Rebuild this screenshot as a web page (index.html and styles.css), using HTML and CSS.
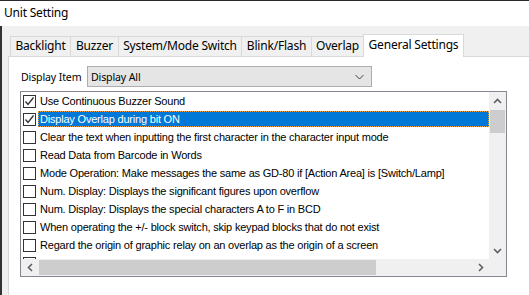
FILE: index.html
```html
<!DOCTYPE html>
<html>
<head>
<meta charset="utf-8">
<title>Unit Setting</title>
<link rel="stylesheet" href="styles.css">
</head>
<body>
<div class="window">
  <div class="titlebar">Unit Setting</div>
  <div class="client">
    <div class="tabs">
      <div class="tab t1">Backlight</div>
      <div class="tab t2">Buzzer</div>
      <div class="tab t3">System/Mode Switch</div>
      <div class="tab t4">Blink/Flash</div>
      <div class="tab t5">Overlap</div>
      <div class="tab t6 active">General Settings</div>
    </div>
    <div class="panel">
      <div class="field">
        <span class="label">Display Item</span>
        <div class="select">
          <span class="select-text">Display All</span>
          <svg class="select-arrow" width="9" height="6" viewBox="0 0 9 6"><polyline points="0.5,1 4.5,5 8.5,1" fill="none" stroke="#444" stroke-width="1"/></svg>
        </div>
      </div>
      <div class="listbox">
        <div class="items">
          <div class="row"><span class="cb"><svg width="11" height="11" viewBox="0 0 11 11"><polyline points="1.5,5.5 4,8.5 9.5,1.5" fill="none" stroke="#333" stroke-width="1.4"/></svg></span><span class="txt">Use Continuous Buzzer Sound</span></div>
          <div class="row selected"><span class="cb"><svg width="11" height="11" viewBox="0 0 11 11"><polyline points="1.5,5.5 4,8.5 9.5,1.5" fill="none" stroke="#333" stroke-width="1.4"/></svg></span><span class="txt">Display Overlap during bit ON</span></div>
          <div class="row"><span class="cb"></span><span class="txt">Clear the text when inputting the first character in the character input mode</span></div>
          <div class="row"><span class="cb"></span><span class="txt">Read Data from Barcode in Words</span></div>
          <div class="row"><span class="cb"></span><span class="txt">Mode Operation: Make messages the same as GD-80 if [Action Area] is [Switch/Lamp]</span></div>
          <div class="row"><span class="cb"></span><span class="txt">Num. Display: Displays the significant figures upon overflow</span></div>
          <div class="row"><span class="cb"></span><span class="txt">Num. Display: Displays the special characters A to F in BCD</span></div>
          <div class="row"><span class="cb"></span><span class="txt">When operating the +/- block switch, skip keypad blocks that do not exist</span></div>
          <div class="row"><span class="cb"></span><span class="txt">Regard the origin of graphic relay on an overlap as the origin of a screen</span></div>
          <div class="row"><span class="cb"></span><span class="txt">&nbsp;</span></div>
        </div>
        <div class="vscroll">
          <div class="sbtn"><svg width="9" height="6" viewBox="0 0 9 6"><polyline points="1,5 4.5,1.5 8,5" fill="none" stroke="#606060" stroke-width="1.6"/></svg></div>
          <div class="vthumb"></div>
          <div class="vtrack"></div>
          <div class="sbtn"><svg width="9" height="6" viewBox="0 0 9 6"><polyline points="1,1 4.5,4.5 8,1" fill="none" stroke="#606060" stroke-width="1.6"/></svg></div>
        </div>
        <div class="hscroll">
          <div class="sbtn"><svg width="6" height="9" viewBox="0 0 6 9"><polyline points="5,1 1.5,4.5 5,8" fill="none" stroke="#606060" stroke-width="1.6"/></svg></div>
          <div class="hthumb"></div>
          <div class="htrack"></div>
          <div class="sbtn"><svg width="6" height="9" viewBox="0 0 6 9"><polyline points="1,1 4.5,4.5 1,8" fill="none" stroke="#606060" stroke-width="1.6"/></svg></div>
        </div>
        <div class="corner"></div>
      </div>
    </div>
  </div>
</div>
</body>
</html>
```

FILE: styles.css
```css
html, body {
  margin: 0;
  padding: 0;
  background: #f0f0f0;
}
body {
  width: 529px;
  height: 295px;
  overflow: hidden;
  font-family: "Noto Sans", "Open Sans", sans-serif;
  color: #000;
}
.window {
  border-top: 1px solid #2b2b2b;
  height: 294px;
  display: flex;
  flex-direction: column;
}
.titlebar {
  height: 25px;
  line-height: 24px;
  background: #fff;
  padding-left: 4px;
  font-size: 12px;
  letter-spacing: -0.2px;
}
.client {
  flex: 1;
  background: #f0f0f0;
  border-left: 2px solid #333;
  padding: 10px 0 0 6px;
  display: flex;
  flex-direction: column;
}
.tabs {
  display: flex;
  align-items: flex-end;
  height: 20px;
  padding-left: 2px;
  position: relative;
  z-index: 1;
}
.tab {
  box-sizing: border-box;
  height: 20px;
  border: 1px solid #d9d9d9;
  border-bottom: none;
  margin-right: -1px;
  background: #f0f0f0;
  font-size: 12px;
  line-height: 18px;
  text-align: center;
  letter-spacing: -0.2px;
  white-space: nowrap;
}
.t1 { width: 61px; }
.t2 { width: 49px; }
.t3 { width: 124px; }
.t4 { width: 71px; }
.t5 { width: 53px; }
.t6 { width: 101px; }
.tab.active {
  height: 23px;
  background: #fff;
  margin-bottom: -1px;
  line-height: 20px;
}
.panel {
  flex: 1;
  background: #fff;
  border: 1px solid #d9d9d9;
  border-right: none;
  border-bottom: none;
}
.field {
  display: flex;
  align-items: center;
  margin-top: 9px;
  padding-left: 12px;
  height: 21px;
}
.label {
  flex: none;
  width: 66px;
  font-size: 10.6px;
  letter-spacing: -0.15px;
  white-space: nowrap;
}
.select {
  box-sizing: border-box;
  width: 285px;
  height: 21px;
  border: 1px solid #adadad;
  background: #e5e5e5;
  display: flex;
  align-items: center;
  justify-content: space-between;
  padding: 0 7px 0 3px;
  font-size: 10.6px;
  letter-spacing: -0.15px;
}
.listbox {
  margin: 4px 0 0 11px;
  width: 485px;
  height: 184px;
  border: 1px solid #828790;
  display: grid;
  grid-template-columns: 468px 17px;
  grid-template-rows: 167px 17px;
}
.items {
  overflow: hidden;
  font-family: "Liberation Sans", Arial, sans-serif;
  font-size: 11px;
  letter-spacing: -0.2px;
}
.row {
  height: 18px;
  display: flex;
  align-items: center;
  padding-left: 2px;
}
.cb {
  box-sizing: border-box;
  flex: none;
  width: 13px;
  height: 13px;
  border: 1px solid #333;
  background: #fff;
  display: flex;
  align-items: center;
  justify-content: center;
}
.cb svg { display: block; }
.txt {
  flex: 1;
  box-sizing: border-box;
  margin-left: 2px;
  padding: 0 1px;
  height: 16px;
  line-height: 14px;
  white-space: nowrap;
  border: 1px solid transparent;
}
.row.selected .txt {
  background: #0078d7;
  color: #fff;
  border: 1px dotted #f0a040;
}
.vscroll {
  background: #f0f0f0;
  display: flex;
  flex-direction: column;
}
.sbtn {
  flex: none;
  width: 17px;
  height: 17px;
  display: flex;
  align-items: center;
  justify-content: center;
}
.vthumb {
  height: 23px;
  margin: 1px 1px 0;
  background: #cdcdcd;
}
.vtrack { flex: 1; }
.hscroll {
  background: #f0f0f0;
  display: flex;
}
.hthumb {
  width: 337px;
  margin: 1px 0 1px 1px;
  background: #cdcdcd;
}
.htrack { flex: 1; }
.corner { background: #f0f0f0; }
```
